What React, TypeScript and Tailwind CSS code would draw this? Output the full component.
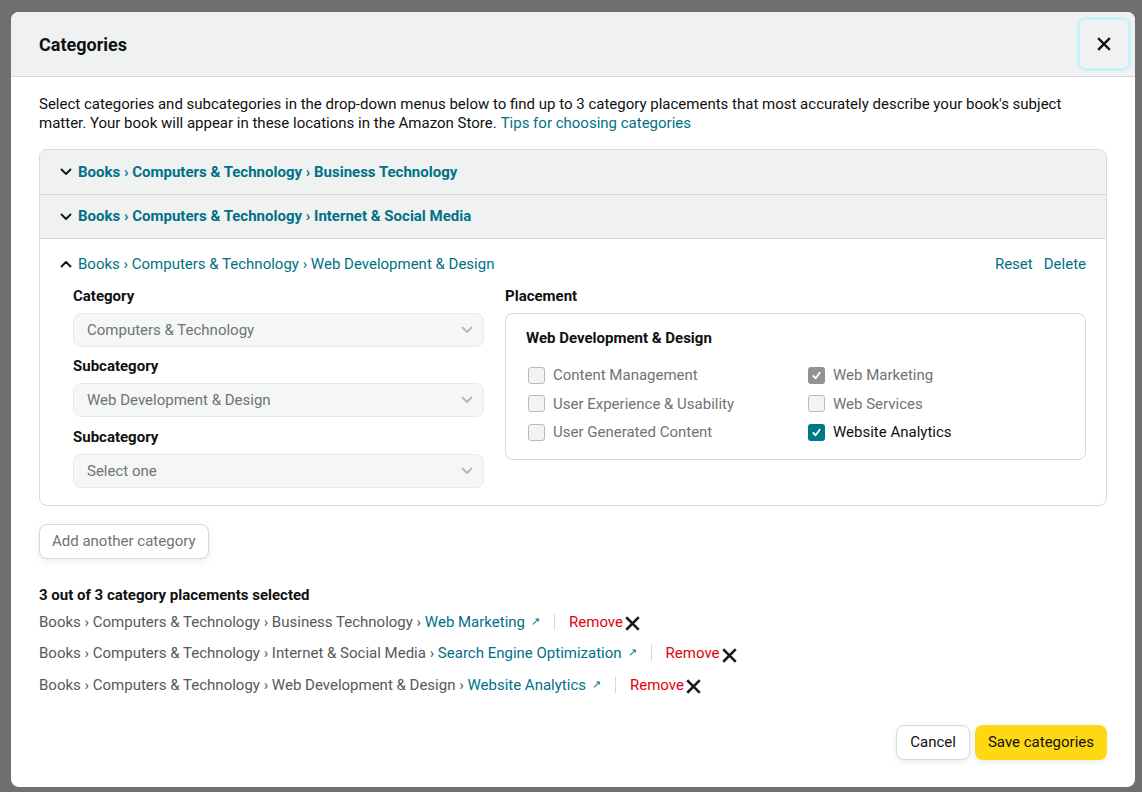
import React from "react";

const font = { fontFamily: "Roboto, 'Noto Sans', sans-serif" };

const Chevron = ({ up = false, className = "" }: { up?: boolean; className?: string }) => (
  <svg viewBox="0 0 12 8" className={className} fill="none" stroke="currentColor" strokeWidth="1.8" strokeLinecap="round" strokeLinejoin="round">
    {up ? <path d="M1.5 6.5 6 2l4.5 4.5" /> : <path d="M1.5 1.5 6 6l4.5-4.5" />}
  </svg>
);

const Check = () => (
  <svg viewBox="0 0 12 12" className="w-[11px] h-[11px]" fill="none" stroke="white" strokeWidth="2" strokeLinecap="round" strokeLinejoin="round">
    <path d="M2.5 6.5 5 9l4.5-6" />
  </svg>
);

const Cross = ({ className = "" }: { className?: string }) => (
  <svg viewBox="0 0 14 14" className={className} fill="none" stroke="currentColor" strokeWidth="2.4" strokeLinecap="square">
    <path d="M2 2l10 10M12 2 2 12" />
  </svg>
);

const Select = ({ value }: { value: string }) => (
  <div className="h-[34px] rounded-lg border border-[#e7eaea] bg-[#f5f7f7] flex items-center justify-between pl-[13px] pr-[10px] text-[15px] text-[#6f7373]">
    <span>{value}</span>
    <Chevron className="w-[12px] h-[8px] text-[#b4b8b8]" />
  </div>
);

type BoxState = "off" | "grey" | "on";

const CheckItem = ({ label, state }: { label: string; state: BoxState }) => (
  <div className="flex items-center gap-[8px] h-[28.5px]">
    {state === "off" && <span className="w-[17px] h-[17px] rounded-[3px] border border-[#b7bbbb] bg-[#f2f4f4]" />}
    {state === "grey" && (
      <span className="w-[17px] h-[17px] rounded-[3px] bg-[#8f9393] flex items-center justify-center">
        <Check />
      </span>
    )}
    {state === "on" && (
      <span className="w-[17px] h-[17px] rounded-[3px] bg-[#00768a] flex items-center justify-center">
        <Check />
      </span>
    )}
    <span className={`text-[15px] ${state === "on" ? "text-[#0f1111]" : "text-[#6f7373]"}`}>{label}</span>
  </div>
);

const Placement = ({ path, leaf }: { path: string; leaf: string }) => (
  <div className="flex items-center h-[31.5px] text-[15px]">
    <span className="text-[#565959] whitespace-pre">{path} › </span>
    <span className="text-[#007185]">{leaf}</span>
    <span className="text-[#007185] text-[11px] ml-[6px]">↗</span>
    <span className="w-px h-[16px] bg-[#d5d9d9] mx-[14px]" />
    <span className="text-[#e3000f]">Remove</span>
    <Cross className="w-[15px] h-[15px] text-[#1a1a1a] ml-[2px] mt-[4px]" />
  </div>
);

const Label = ({ children, className = "" }: { children: React.ReactNode; className?: string }) => (
  <div className={`text-[15px] font-bold text-[#0f1111] h-[22px] leading-[22px] ${className}`}>{children}</div>
);

export default function App() {
  return (
    <div className="w-[1142px] h-[792px] bg-[#6d706f] pt-[12px] pl-[11px] overflow-hidden" style={font}>
      <div className="w-[1124px] h-[775px] bg-white rounded-lg overflow-hidden">
        <div className="h-[65px] bg-[#f0f2f2] border-b border-[#d5d9d9] flex items-center justify-between pl-[28px] pr-[4px]">
          <h1 className="text-[18px] font-bold text-[#0f1111]">Categories</h1>
          <button className="w-[54px] h-[54px] rounded-lg border-[3px] border-[#c7f0f8] flex items-center justify-center">
            <Cross className="w-[14px] h-[14px] text-[#0f1111]" />
          </button>
        </div>

        <div className="px-[28px] pt-[18px]">
          <div className="text-[15px] leading-[19px] text-[#0f1111]">
            <div>Select categories and subcategories in the drop-down menus below to find up to 3 category placements that most accurately describe your book's subject</div>
            <div className="flex gap-[4px]">
              <span>matter. Your book will appear in these locations in the Amazon Store.</span>
              <span className="text-[#007185]">Tips for choosing categories</span>
            </div>
          </div>

          <div className="mt-[16px] border border-[#d5d9d9] rounded-lg overflow-hidden">
            <div className="h-[45px] bg-[#f0f2f2] border-b border-[#d5d9d9] flex items-center pl-[20px] gap-[6px]">
              <Chevron className="w-[12px] h-[8px] text-[#0f1111]" />
              <span className="text-[15px] font-bold text-[#007185]">Books › Computers &amp; Technology › Business Technology</span>
            </div>
            <div className="h-[44px] bg-[#f0f2f2] border-b border-[#d5d9d9] flex items-center pl-[20px] gap-[6px]">
              <Chevron className="w-[12px] h-[8px] text-[#0f1111]" />
              <span className="text-[15px] font-bold text-[#007185]">Books › Computers &amp; Technology › Internet &amp; Social Media</span>
            </div>
            <div className="pt-[14px] pb-[17px] pl-[20px] pr-[20px]">
              <div className="flex items-center justify-between h-[22px]">
                <div className="flex items-center gap-[6px]">
                  <Chevron up className="w-[12px] h-[8px] text-[#0f1111]" />
                  <span className="text-[15px] text-[#007185]">Books › Computers &amp; Technology › Web Development &amp; Design</span>
                </div>
                <div className="flex gap-[11px] text-[15px] text-[#007185]">
                  <span>Reset</span>
                  <span>Delete</span>
                </div>
              </div>
              <div className="flex gap-[21px] pl-[13px] mt-[10px]">
                <div className="w-[411px]">
                  <Label>Category</Label>
                  <div className="mt-[6px]"><Select value="Computers & Technology" /></div>
                  <Label className="mt-[8px]">Subcategory</Label>
                  <div className="mt-[6px]"><Select value="Web Development & Design" /></div>
                  <Label className="mt-[9px]">Subcategory</Label>
                  <div className="mt-[6px]"><Select value="Select one" /></div>
                </div>
                <div className="flex-1">
                  <Label>Placement</Label>
                  <div className="mt-[6px] border border-[#d5d9d9] rounded-lg pl-[20px] pt-[13px] pb-[12px]">
                    <Label>Web Development &amp; Design</Label>
                    <div className="grid grid-cols-[280px_1fr] mt-[12px] pl-[2px]">
                      <CheckItem label="Content Management" state="off" />
                      <CheckItem label="Web Marketing" state="grey" />
                      <CheckItem label="User Experience & Usability" state="off" />
                      <CheckItem label="Web Services" state="off" />
                      <CheckItem label="User Generated Content" state="off" />
                      <CheckItem label="Website Analytics" state="on" />
                    </div>
                  </div>
                </div>
              </div>
            </div>
          </div>

          <button className="mt-[18px] h-[35px] px-[12px] rounded-lg border border-[#d5d9d9] shadow-[0_2px_5px_rgba(213,217,217,0.5)] text-[15px] text-[#6f7373] bg-white">
            Add another category
          </button>

          <Label className="mt-[25px] h-[20px] leading-[20px]">3 out of 3 category placements selected</Label>
          <div>
            <Placement path="Books › Computers & Technology › Business Technology" leaf="Web Marketing" />
            <Placement path="Books › Computers & Technology › Internet & Social Media" leaf="Search Engine Optimization" />
            <Placement path="Books › Computers & Technology › Web Development & Design" leaf="Website Analytics" />
          </div>

          <div className="flex justify-end gap-[5px] mt-[24px]">
            <button className="h-[35px] px-[13px] rounded-lg border border-[#d5d9d9] bg-white shadow-[0_2px_5px_rgba(213,217,217,0.5)] text-[15px] text-[#0f1111]">Cancel</button>
            <button className="h-[35px] px-[13px] rounded-lg bg-[#ffd814] shadow-[0_2px_5px_rgba(213,217,217,0.5)] text-[15px] text-[#0f1111]">Save categories</button>
          </div>
        </div>
      </div>
    </div>
  );
}
